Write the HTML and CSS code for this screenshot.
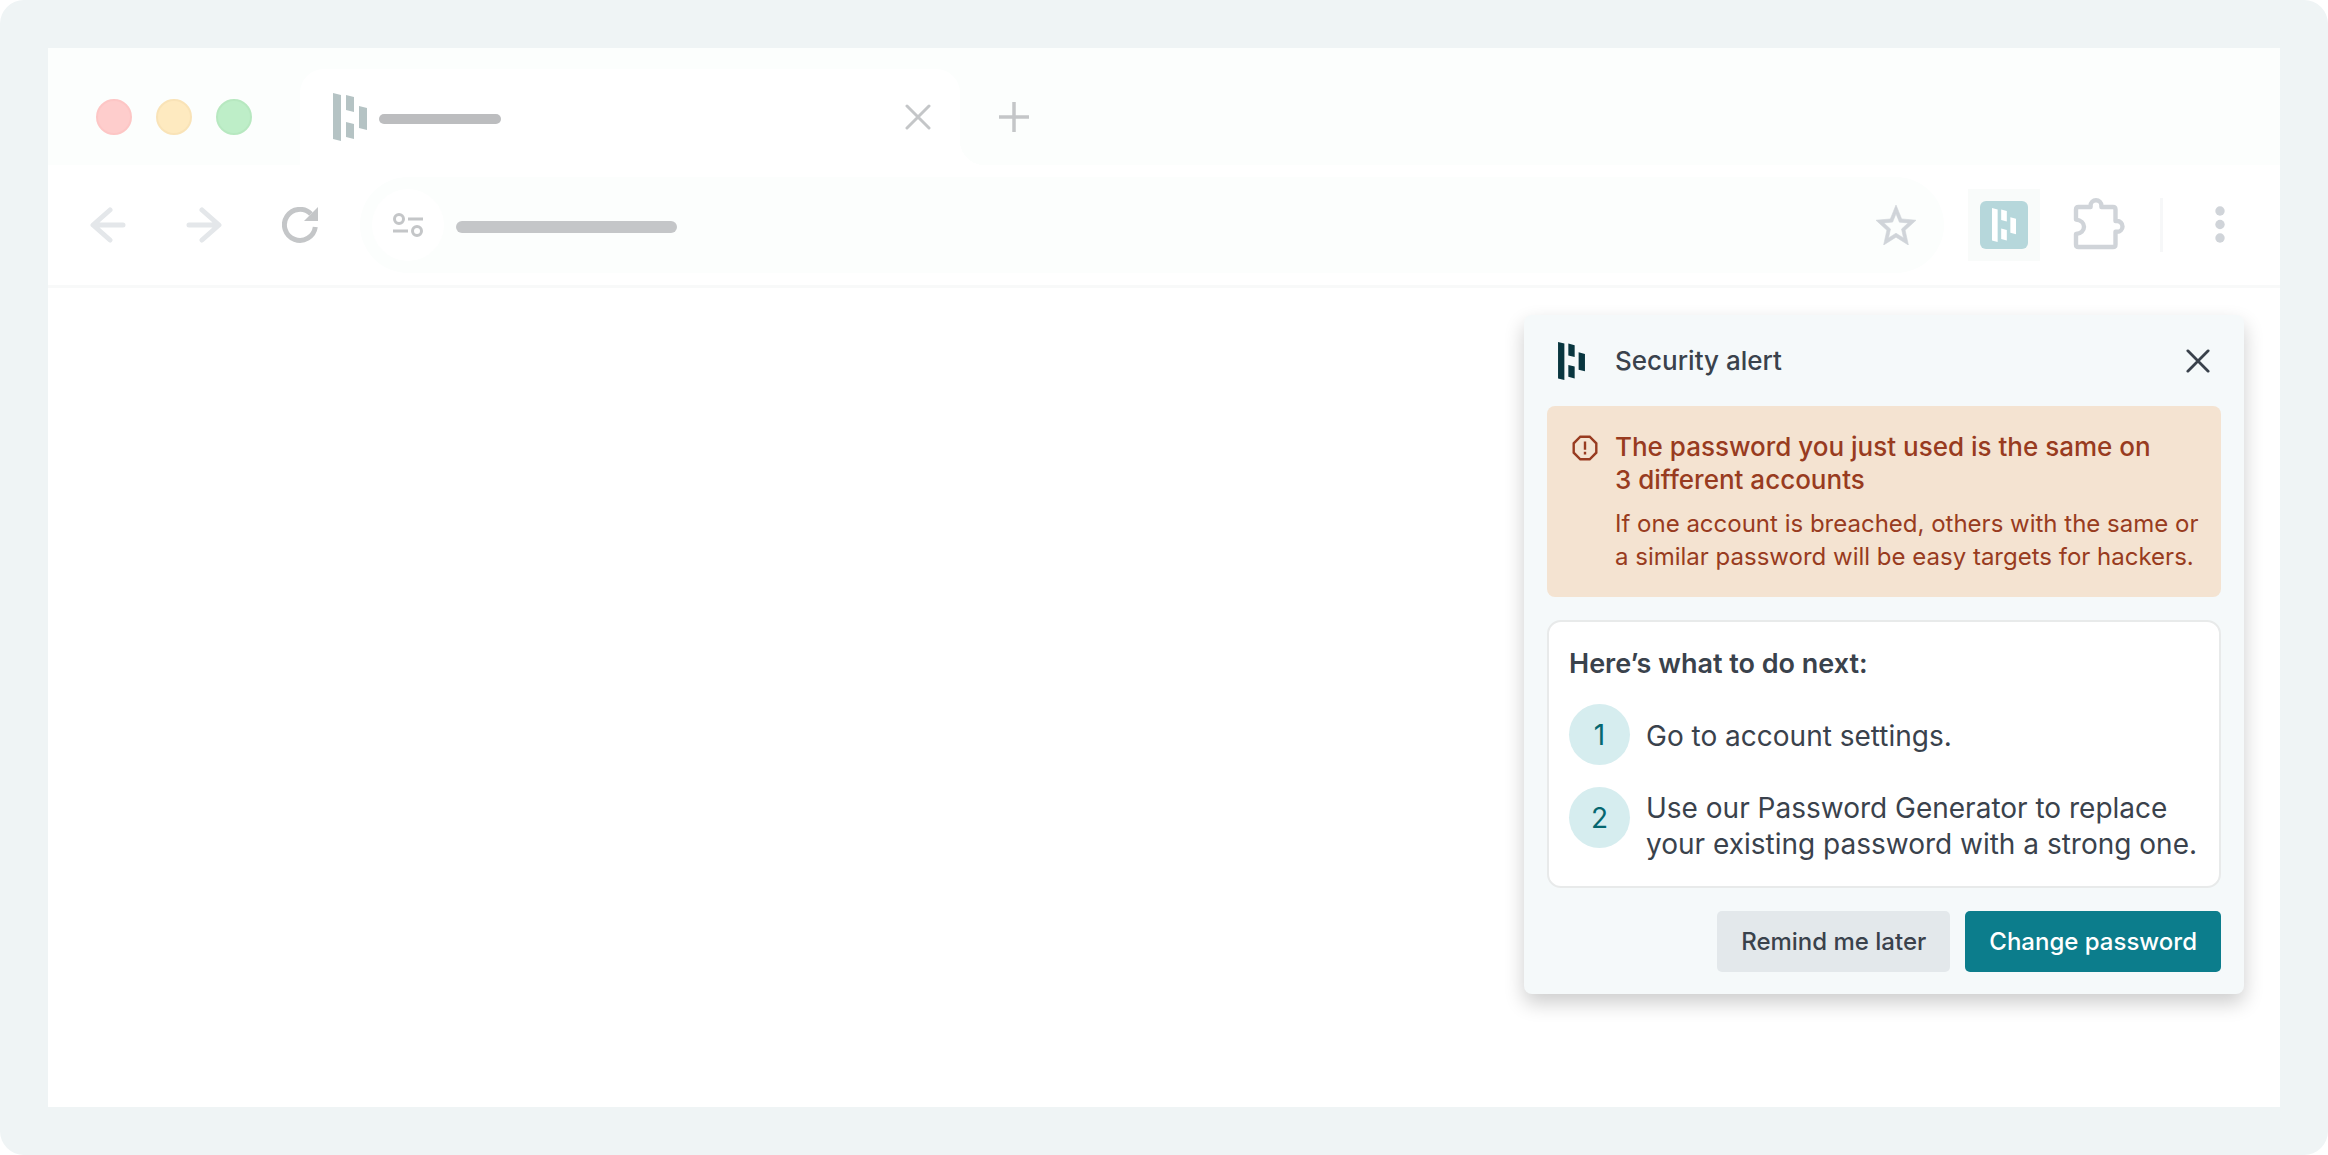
FILE: index.html
```html
<!DOCTYPE html>
<html lang="en">
<head>
<meta charset="utf-8">
<meta name="viewport" content="width=device-width, initial-scale=1">
<title>Security alert</title>
<link rel="stylesheet" href="styles.css">
</head>
<body>
<svg class="defs" aria-hidden="true">
  <symbol id="logo" viewBox="0 0 34 48">
    <path d="M0 0l8 2v46l-8-2zM13 2l8 2v15l-8-2zM13 29l8 2v15l-8-2zM26 13l8 2v22l-8-2z"/>
  </symbol>
  <symbol id="cross" viewBox="0 0 26 26">
    <path d="M2 2l22 22M24 2L2 24" fill="none" stroke="currentColor" stroke-width="3" stroke-linecap="round"/>
  </symbol>
</svg>
<div class="frame">
  <div class="window">
    <div class="titlebar">
      <div class="lights">
        <span class="light light-red"></span>
        <span class="light light-yellow"></span>
        <span class="light light-green"></span>
      </div>
      <div class="tab">
        <svg class="tab-logo"><use href="#logo"/></svg>
        <span class="tab-title"></span>
        <button class="icon-button tab-close" aria-label="Close tab"><svg width="26" height="26"><use href="#cross"/></svg></button>
      </div>
      <div class="strip">
        <button class="icon-button" aria-label="New tab"><svg width="30" height="30" viewBox="0 0 30 30"><path d="M15 0v30M0 15h30" stroke="currentColor" stroke-width="3.500"/></svg></button>
      </div>
    </div>

    <div class="toolbar">
      <div class="nav">
        <button class="icon-button nav-muted" aria-label="Back"><svg width="36" height="36" viewBox="0 0 36 36"><path d="M33 18H4M20 3L3 18l17 15" class="nav-line"/></svg></button>
        <button class="icon-button nav-muted" aria-label="Forward"><svg width="36" height="36" viewBox="0 0 36 36"><path d="M3 18h29M16 3l17 15-17 15" class="nav-line"/></svg></button>
        <button class="icon-button" aria-label="Reload"><svg width="36" height="36" viewBox="0 0 36 36"><path d="M33.300 20A15.500 15.500 0 1 1 29 7" fill="none" stroke="currentColor" stroke-width="5"/><path d="M36 0v14H22z" fill="currentColor"/></svg></button>
      </div>
      <div class="address">
        <button class="icon-button site-info" aria-label="Site information"><svg width="30" height="24" viewBox="0 0 30 24" fill="none" stroke="currentColor" stroke-width="3"><circle cx="6" cy="6" r="4.500"/><circle cx="24" cy="18" r="4.500"/><path d="M15 6h15M0 18h15"/></svg></button>
        <span class="address-text"></span>
        <button class="icon-button star" aria-label="Bookmark"><svg width="40" height="40" viewBox="2 2 20 19" preserveAspectRatio="none" fill="currentColor" stroke="currentColor" stroke-width=".3"><path d="M22 9.240l-7.190-.620L12 2 9.190 8.630 2 9.240l5.460 4.730L5.820 21 12 17.270 18.180 21l-1.630-7.030zM12 15.400l-3.760 2.270 1-4.280-3.320-2.880 4.380-.380L12 6.100l1.710 4.040 4.380.380-3.320 2.880 1 4.280z"/></svg></button>
      </div>
      <div class="extensions">
        <button class="icon-button extension" aria-label="Password manager"><span class="extension-tile"><svg width="24" height="34"><use href="#logo"/></svg></span></button>
        <button class="icon-button puzzle" aria-label="Extensions"><svg width="54" height="54" viewBox="0 1 54 54" fill="none" stroke="currentColor" stroke-width="4.400"><path d="M3 22.600V12.500Q3 10 5.500 10H17.600V8.600a5.400 5.400 0 0 1 10.800 0V10H40q2.500 0 2.500 2.500V24h1.600a5.400 5.400 0 0 1 0 10.800h-1.600V47.500Q42.500 50 40 50H5.500Q3 50 3 47.500V37C8 36.500 11 33.500 11 29.800S8 23.100 3 22.600z" stroke-linejoin="round"/></svg></button>
        <span class="divider"></span>
        <button class="icon-button menu" aria-label="Menu"><svg width="10" height="38" viewBox="0 0 10 38" fill="currentColor"><circle cx="5" cy="5" r="4.700"/><circle cx="5" cy="18.500" r="4.700"/><circle cx="5" cy="32" r="4.700"/></svg></button>
      </div>
    </div>

    <main class="page">
      <section class="popup" aria-labelledby="popup-title">
        <header class="popup-header">
          <svg class="popup-logo"><use href="#logo"/></svg>
          <h1 class="popup-title" id="popup-title">Security alert</h1>
          <button class="icon-button popup-close" aria-label="Close"><svg width="24" height="24"><use href="#cross"/></svg></button>
        </header>

        <div class="alert" role="alert">
          <svg class="alert-icon" viewBox="0 0 26 26" fill="none" stroke="currentColor" stroke-width="2.400"><path d="M8.300 1.700h9.400l6.600 6.600v9.400l-6.600 6.600H8.300l-6.600-6.600V8.300zM13 6.500v8.200M13 16.800v2.600"/></svg>
          <div>
            <h2 class="alert-title">The password you just used is the same on <br>3 different accounts</h2>
            <p class="alert-text">If one account is breached, others with the same or <br>a similar password will be easy targets for hackers.</p>
          </div>
        </div>

        <div class="steps">
          <h2 class="steps-title">Here’s what to do next:</h2>
          <ol class="steps-list">
            <li class="step"><span class="step-number">1</span><span class="step-text">Go to account settings.</span></li>
            <li class="step"><span class="step-number">2</span><span class="step-text">Use our Password Generator to replace <br>your existing password with a strong one.</span></li>
          </ol>
        </div>

        <footer class="actions">
          <button class="button button-secondary">Remind me later</button>
          <button class="button button-primary">Change password</button>
        </footer>
      </section>
    </main>
  </div>
</div>
</body>
</html>
```
FILE: styles.css
```css
* {
  box-sizing: border-box;
}

body {
  margin: 0;
  background: #fff;
  color: #3a424c;
  font-family: Inter, "Liberation Sans", sans-serif;
}

h1, h2, p, ol {
  margin: 0;
  padding: 0;
}

svg {
  display: block;
  flex: none;
}

.defs {
  position: absolute;
  width: 0;
  height: 0;
}

.frame {
  display: flex;
  min-height: 100vh;
  padding: 48px;
  border-radius: 24px;
  background: #eff4f5;
}

.window {
  display: flex;
  flex: 1;
  flex-direction: column;
  min-width: 0;
  background: #fff;
}

.icon-button {
  display: flex;
  align-items: center;
  justify-content: center;
  flex: none;
  padding: 0;
  border: 0;
  background: none;
  color: #c4c6c8;
  cursor: pointer;
}

/* Tab strip */

.titlebar {
  display: flex;
  height: 117px;
  padding-top: 21px;
  background: #fcfefd;
}

.lights {
  display: flex;
  align-items: center;
  gap: 24px;
  padding: 0 48px;
}

.light {
  width: 36px;
  height: 36px;
  border: 2px solid;
  border-radius: 50%;
}

.light-red {
  border-color: #fdc6c5;
  background: #fecdcc;
}

.light-yellow {
  border-color: #f9e3b7;
  background: #feeac0;
}

.light-green {
  border-color: #b7e8c0;
  background: #beeec8;
}

.tab {
  display: flex;
  align-items: center;
  flex: 0 1 660px;
  padding: 0 29px 0 33px;
  border-radius: 24px 24px 0 0;
  background: #fff;
}

.tab-logo {
  width: 34px;
  height: 48px;
  fill: #b5c3c4;
}

.tab-title {
  width: 122px;
  height: 10px;
  margin-top: 4px;
  margin-left: 12px;
  border-radius: 5px;
  background: #bcbdbf;
}

.tab-close {
  margin-left: auto;
}

/* The gradient draws the curved foot where the tab meets the toolbar */
.strip {
  display: flex;
  align-items: center;
  flex: 1;
  padding-left: 39px;
  background: radial-gradient(circle at 100% 0, #fcfefd 24px, #fff 24px) left bottom / 24px 24px no-repeat;
}

/* Toolbar */

.toolbar {
  display: flex;
  align-items: center;
  height: 123px;
  padding: 0 55px 0 42px;
  border-bottom: 3px solid #f8f9f9;
  background: #fff;
}

.nav {
  display: flex;
  gap: 60px;
  margin-right: 42px;
}

.nav-muted {
  color: #e4e7ea;
}

.nav-line {
  fill: none;
  stroke: currentColor;
  stroke-width: 5;
  stroke-linecap: round;
  stroke-linejoin: round;
}

.address {
  display: flex;
  align-items: center;
  flex: 1;
  height: 96px;
  padding: 0 28px 0 12px;
  border-radius: 48px;
  background: #fcfefd;
}

.site-info {
  width: 72px;
  height: 72px;
  border-radius: 50%;
  background: #fff;
}

.address-text {
  width: 221px;
  height: 12px;
  margin-top: 4px;
  margin-left: 12px;
  border-radius: 6px;
  background: #c4c6c8;
}

.star {
  margin-left: auto;
  color: #d0d4d9;
}

.extensions {
  display: flex;
  align-items: center;
  margin-left: 24px;
}

.extension {
  width: 72px;
  height: 72px;
  background: #f9fbfa;
}

.extension-tile {
  display: flex;
  align-items: center;
  justify-content: center;
  width: 48px;
  height: 48px;
  border-radius: 6px;
  background: #b6d7db;
  fill: #fff;
}

.puzzle {
  margin: 0 33px;
  color: #d0d4d9;
}

.divider {
  width: 3px;
  height: 54px;
  background: #f6f7f8;
}

.menu {
  margin-left: 52px;
  color: #d0d4d9;
}

/* Alert popup */

.page {
  display: flex;
  align-items: flex-start;
  justify-content: flex-end;
  flex: 1;
  padding: 27px 36px;
}

.popup {
  width: 720px;
  padding: 0 23px 22px;
  border-radius: 8px;
  background: #f5f9fa;
  box-shadow: 0 9px 20px rgba(0, 0, 0, 0.2);
}

.popup-header {
  display: flex;
  align-items: center;
  height: 91px;
  padding: 0 11px;
}

.popup-logo {
  width: 27px;
  height: 38px;
  fill: #09363f;
}

.popup-title {
  margin-left: 30px;
  font-size: 26px;
  font-weight: 500;
  line-height: 33px;
}

.popup-close {
  margin-left: auto;
  color: #3a424c;
}

.alert {
  display: flex;
  gap: 17px;
  padding: 24px 0 24px 25px;
  border-radius: 8px;
  background: #f4e3d1;
  color: #983b20;
}

.alert-icon {
  width: 26px;
  height: 26px;
  margin-top: 5px;
}

.alert-title {
  font-size: 26px;
  font-weight: 500;
  line-height: 33px;
}

.alert-text {
  margin-top: 11px;
  font-size: 24px;
  line-height: 33px;
}

.steps {
  margin-top: 23px;
  padding: 24px 8px 24px 20px;
  border: 2px solid #e8eaea;
  border-radius: 14px;
  background: #fff;
}

.steps-title {
  font-size: 27px;
  font-weight: 600;
  line-height: 36px;
}

.steps-list {
  display: grid;
  gap: 22px;
  margin-top: 22px;
  list-style: none;
}

.step {
  display: flex;
  gap: 16px;
}

.step-number {
  display: flex;
  align-items: center;
  justify-content: center;
  flex: none;
  width: 61px;
  height: 61px;
  border-radius: 50%;
  background: #d6edef;
  color: #066770;
  font-size: 28px;
}

.step-text {
  align-self: center;
  padding-top: 3px;
  font-size: 28px;
  line-height: 36px;
}

.actions {
  display: flex;
  justify-content: flex-end;
  gap: 15px;
  margin-top: 23px;
}

.button {
  height: 61px;
  padding: 0 24px;
  border: 0;
  border-radius: 5px;
  font: 500 24px/33px Inter, "Liberation Sans", sans-serif;
  cursor: pointer;
}

.button-secondary {
  background: #e3e8eb;
  color: #3a424c;
}

.button-primary {
  background: #0c7d8c;
  color: #fff;
}
```
